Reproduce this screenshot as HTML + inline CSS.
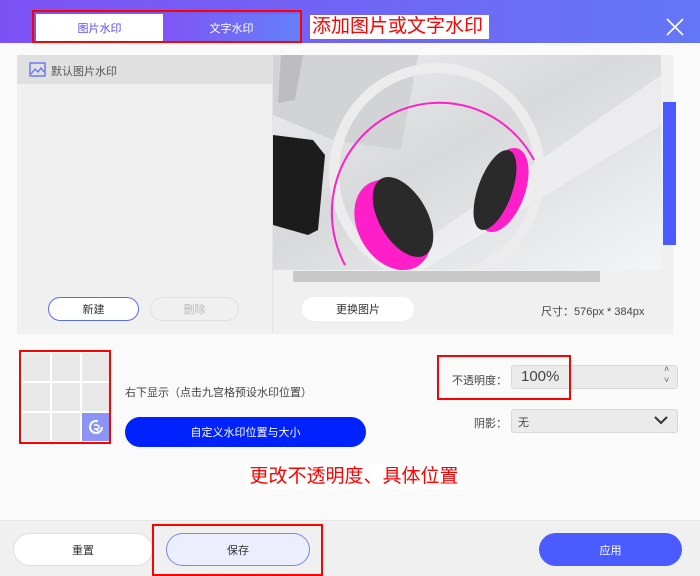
<!DOCTYPE html>
<html><head><meta charset="utf-8"><style>
*{margin:0;padding:0;box-sizing:border-box}
body{width:700px;height:576px;background:#fafafa;font-family:"Liberation Sans","Noto Sans CJK SC",sans-serif;position:relative;overflow:hidden;font-size:11px;color:#333}
.a{position:absolute}
.btn{position:absolute;border-radius:14px;display:flex;align-items:center;justify-content:center;font-size:11px}
</style></head><body>
<div class="a" style="left:0;top:0;width:700px;height:43px;background:linear-gradient(90deg,#7d52f4,#6477f7)"></div>
<div class="a" style="left:36px;top:14px;width:127px;height:27px;background:#fff;color:#5a4cf0;display:flex;align-items:center;justify-content:center;font-size:11px">图片水印</div>
<div class="a" style="left:163px;top:14px;width:137px;height:27px;background:linear-gradient(90deg,#7f55f6,#6480f8);color:#fff;display:flex;align-items:center;justify-content:center;font-size:11px">文字水印</div>
<div class="a" style="left:32px;top:10px;width:270px;height:33px;border:2px solid #f00"></div>
<div class="a" style="left:310px;top:15px;width:179px;height:24px;background:#fff;color:#f00;font-size:19px;line-height:24px;padding-left:2px">添加图片或文字水印</div>
<svg class="a" style="left:666px;top:18px" width="18" height="18"><path d="M1 1L17 17M17 1L1 17" stroke="#fff" stroke-width="1.6"/></svg>

<div class="a" style="left:17px;top:55px;width:656px;height:279px;background:#f0f0f0"></div>
<div class="a" style="left:17px;top:55px;width:255px;height:29px;background:#e0e0e0"></div>
<svg class="a" style="left:29px;top:62px" width="17" height="15"><rect x="1" y="1" width="15" height="13" fill="none" stroke="#5b6cf0" stroke-width="1.3"/><path d="M2 12L6 7L9 10L12 6L15 10" fill="none" stroke="#5b6cf0" stroke-width="1.2"/></svg>
<div class="a" style="left:51px;top:63px;font-size:11px;color:#555">默认图片水印</div>
<div class="a" style="left:272px;top:55px;width:1px;height:279px;background:#e4e4e4"></div>

<svg class="a" style="left:273px;top:55px" width="388" height="215" viewBox="0 0 388 215">
<defs><linearGradient id="bg" x1="0" y1="0" x2="1" y2="1"><stop offset="0" stop-color="#eeeff0"/><stop offset=".45" stop-color="#d8d9db"/><stop offset="1" stop-color="#f4f5f7"/></linearGradient></defs>
<rect width="388" height="215" fill="url(#bg)"/>
<path d="M0 0H145L128 95L60 85L0 60Z" fill="#d2d3d5"/>
<path d="M8 0H30L22 45L5 48Z" fill="#bdbdbf"/>
<path d="M0 80L40 85L52 100L45 175L35 180L0 170Z" fill="#1c1c1c"/>
<path d="M150 215L388 70V20L110 215Z" fill="#f4f4f6" opacity=".6"/>
<ellipse cx="164" cy="118" rx="103" ry="105" fill="none" stroke="#ececed" stroke-width="10"/>
<path d="M72 210A103 105 0 1 1 261 105" fill="none" stroke="#ff1fc8" stroke-width="2"/>
<ellipse cx="120" cy="170" rx="35" ry="48" fill="#ff1fc8" transform="rotate(-30 120 170)"/>
<ellipse cx="130" cy="162" rx="24" ry="44" fill="#2a2a2a" transform="rotate(-30 130 162)"/>
<ellipse cx="230" cy="135" rx="22" ry="44" fill="#ff1fc8" transform="rotate(20 230 135)"/>
<ellipse cx="222" cy="135" rx="17" ry="42" fill="#2a2a2a" transform="rotate(20 222 135)"/>
</svg>
<div class="a" style="left:663px;top:102px;width:13px;height:143px;background:#4a5cff"></div>
<div class="a" style="left:293px;top:271px;width:307px;height:11px;background:#c8c8c8"></div>

<div class="btn" style="left:48px;top:297px;width:91px;height:24px;border:1px solid #5b6cf0;background:#fff">新建</div>
<div class="btn" style="left:150px;top:297px;width:89px;height:24px;border:1px solid #e0e0e0;color:#bbb">删除</div>
<div class="btn" style="left:302px;top:297px;width:112px;height:24px;background:#fff">更换图片</div>
<div class="a" style="left:541px;top:303px;font-size:11px;color:#444">尺寸：576px * 384px</div>

<div class="a" style="left:19px;top:350px;width:92px;height:94px;border:2px solid #f00;background:#fff">
<div style="display:grid;grid-template-columns:27px 28px 27px;grid-template-rows:28px 28px 28px;gap:2px;padding:1px 2px">
<div style="background:#e8e8e8"></div><div style="background:#e8e8e8"></div><div style="background:#e8e8e8"></div>
<div style="background:#e8e8e8"></div><div style="background:#e8e8e8"></div><div style="background:#e8e8e8"></div>
<div style="background:#e8e8e8"></div><div style="background:#e8e8e8"></div><div style="background:#8c95f6;display:flex;align-items:center;justify-content:center"><svg width="16" height="16"><circle cx="8" cy="8" r="6" fill="none" stroke="#fff" stroke-width="2" stroke-dasharray="30 8"/><path d="M6 6h3a2 2 0 0 1 0 4h-3M8 10l2 2" fill="none" stroke="#fff" stroke-width="1.5"/></svg></div>
</div></div>
<div class="a" style="left:125px;top:384px;font-size:11px;color:#444">右下显示（点击九宫格预设水印位置）</div>
<div class="btn" style="left:125px;top:417px;width:241px;height:30px;background:#0022ff;color:#fff;border-radius:15px">自定义水印位置与大小</div>

<div class="a" style="left:452px;top:372px;font-size:11px;color:#444">不透明度：</div>
<div class="a" style="left:511px;top:365px;width:167px;height:24px;background:#ebebeb;border:1px solid #d8d8d8;border-radius:3px;font-size:15px;color:#444;padding:2px 0 0 9px">100%</div>
<div class="a" style="left:664px;top:364px;font-size:9px;color:#666;line-height:11px">˄<br>˅</div>
<div class="a" style="left:437px;top:355px;width:134px;height:45px;border:2px solid #f00"></div>
<div class="a" style="left:474px;top:415px;font-size:11px;color:#444">阴影：</div>
<div class="a" style="left:511px;top:409px;width:167px;height:24px;background:#ebebeb;border:1px solid #d8d8d8;border-radius:3px;font-size:11px;color:#444;padding:4px 0 0 6px">无</div>
<svg class="a" style="left:654px;top:415px" width="14" height="10"><path d="M1 2L7 8L13 2" fill="none" stroke="#333" stroke-width="2"/></svg>

<div class="a" style="left:245px;top:464px;width:218px;height:25px;background:#fff;color:#f00;font-size:19px;line-height:25px;text-align:center">更改不透明度、具体位置</div>

<div class="a" style="left:0;top:520px;width:700px;height:56px;background:#f0f0f0;border-top:1px solid #e6e6e6"></div>
<div class="btn" style="left:13px;top:533px;width:140px;height:33px;background:#fff;border:1px solid #ddd;border-radius:17px">重置</div>
<div class="btn" style="left:166px;top:533px;width:144px;height:33px;background:#eceefd;border:1px solid #7a86f2;border-radius:17px">保存</div>
<div class="a" style="left:152px;top:524px;width:171px;height:52px;border:2px solid #f00"></div>
<div class="btn" style="left:539px;top:533px;width:143px;height:33px;background:#4a5cff;color:#fff;border-radius:17px">应用</div>
</body></html>
